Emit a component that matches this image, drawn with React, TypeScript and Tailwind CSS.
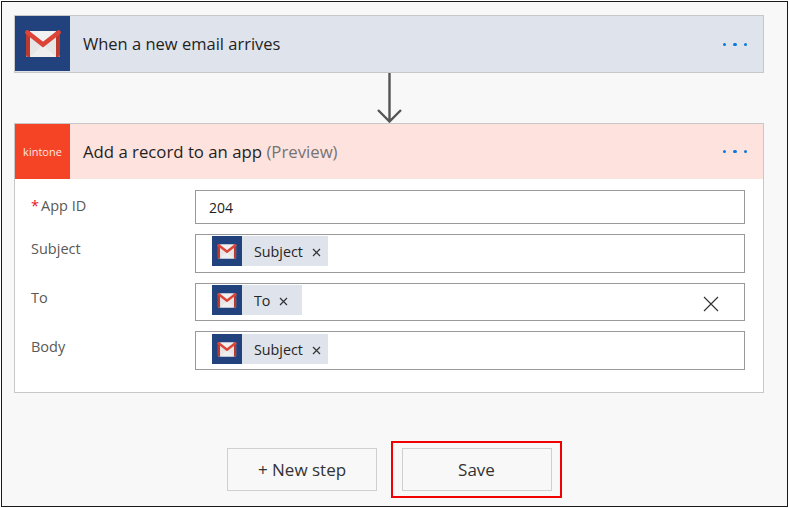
const Gmail = ({ w, h }: { w: number; h: number }) => (
  <svg width={w} height={h} viewBox="0 0 36 28" aria-hidden="true">
    <rect x="1" y="1" width="34" height="26" rx="1.5" fill="#e6e6e6" />
    <path d="M5 1 H31 L18 12 Z" fill="#f1f1f1" />
    <path d="M5 27 L18 15 L31 27 Z" fill="#efefef" />
    <path d="M5 3 V27 H3 Q1 27 1 25 V3 Q1 1 3 1 H5 Z M31 3 V27 H33 Q35 27 35 25 V3 Q35 1 33 1 H31 Z" fill="#bb3a30" />
    <path d="M2.5 2.5 L18 14.5 L33.5 2.5" fill="none" stroke="#dc4437" strokeWidth="4.6" strokeLinecap="round" />
  </svg>
);

const Token = ({ label, width }: { label: string; width: string }) => (
  <div className={`flex h-[30px] items-center bg-[#dfe3ec] ${width}`}>
    <div className="flex h-[30px] w-[30px] shrink-0 items-center justify-center bg-[#21427d]">
      <Gmail w={20} h={15} />
    </div>
    <span className="ml-3 pt-[2px] text-[14.3px] leading-none text-[#252525]">{label}</span>
    <svg className="ml-[9px] mt-[3px]" width="9" height="9" viewBox="0 0 9 9" aria-hidden="true">
      <path d="M1 1 L8 8 M8 1 L1 8" stroke="#333" strokeWidth="1.2" />
    </svg>
  </div>
);

const Row = ({ label, required, pt, tokenPt, h, mb, children }: { label: string; required?: boolean; pt: string; tokenPt: string; h: string; mb: string; children: React.ReactNode }) => (
  <div className={`flex ${mb}`}>
    <div className={`w-[180px] shrink-0 pl-4 text-[14.5px] leading-5 text-[#595959] ${pt}`}>
      {required && <span className="mr-[2px] text-[#e81123]">*</span>}
      {label}
    </div>
    <div className={`relative flex w-[550px] items-start border border-[#999] bg-white pl-4 ${tokenPt} ${h}`}>
      {children}
    </div>
  </div>
);

const Dots = ({ offset }: { offset: string }) => (
  <div className={`flex gap-[7px] pr-[16px] ${offset}`}>
    <span className="h-[3.5px] w-[3.5px] rounded-full bg-[#0a78e0]" />
    <span className="h-[3.5px] w-[3.5px] rounded-full bg-[#0a78e0]" />
    <span className="h-[3.5px] w-[3.5px] rounded-full bg-[#0a78e0]" />
  </div>
);

export default function App() {
  return (
    <div className="h-[508px] w-[789px] bg-white pl-px pt-px font-['Open_Sans',sans-serif]">
      <div className="flex h-[506px] w-[787px] flex-col border border-[#1a1a1a] bg-[#f8f8f8] pl-3 pt-[13px]">
        <div className="flex h-[58px] w-[750px] items-center border border-[#c8c8c8] bg-[#dfe3ec]">
          <div className="flex h-[55px] w-[55px] shrink-0 items-center justify-center self-start bg-[#21427d]">
            <Gmail w={36} h={28} />
          </div>
          <div className="ml-[13px] mt-px flex-1 text-[16.5px] text-[#1f1f1f]">When a new email arrives</div>
          <Dots offset="mt-px" />
        </div>

        <div className="flex h-[50px] w-[750px] justify-center">
          <svg width="28" height="50" viewBox="0 0 28 50" aria-hidden="true">
            <path d="M14.5 0 V48.5 M3 37 L14.5 48.5 L26 37" fill="none" stroke="#555" strokeWidth="2.4" />
          </svg>
        </div>

        <div className="h-[270px] w-[750px] border border-[#c8c8c8] bg-white">
          <div className="flex h-[55px] items-center bg-[#fde2de]">
            <div className="flex h-[55px] w-[55px] shrink-0 items-center justify-center bg-[#f44325]">
              <span className="text-[11px] leading-none text-[#fde6e0]">kintone</span>
            </div>
            <div className="ml-[13px] mt-px flex-1 text-[16.75px] text-[#1f1f1f]">
              Add a record to an app <span className="text-[#747474]">(Preview)</span>
            </div>
            <Dots offset="" />
          </div>
          <div className="pt-[11px]">
            <Row label="App ID" required pt="pt-[6px]" tokenPt="pt-px" h="h-[34px]" mb="mb-[10px]">
              <span className="-ml-[3px] pt-[6px] text-[14px] leading-5 text-[#222]">204</span>
            </Row>
            <Row label="Subject" pt="pt-[5px]" tokenPt="pt-px" h="h-[39px]" mb="mb-[10px]">
              <Token label="Subject" width="w-[116px]" />
            </Row>
            <Row label="To" pt="pt-[5px]" tokenPt="pt-px" h="h-[38px]" mb="mb-[10px]">
              <Token label="To" width="w-[90px]" />
              <svg className="absolute right-[25px] top-[12px]" width="16" height="16" viewBox="0 0 16 16" aria-hidden="true">
                <path d="M1 1 L15 15 M15 1 L1 15" stroke="#333" strokeWidth="1.2" />
              </svg>
            </Row>
            <Row label="Body" pt="pt-[6px]" tokenPt="pt-[2px]" h="h-[39px]" mb="mb-0">
              <Token label="Subject" width="w-[116px]" />
            </Row>
          </div>
        </div>

        <div className="mt-[48px] flex w-[750px] items-center">
          <button className="ml-[213px] h-[43px] w-[150px] border border-[#cfcfcf] text-[17px] text-[#333]">+ New step</button>
          <div className="ml-[14px] flex h-[57px] w-[171px] items-center justify-center border-2 border-[#f00000]">
            <button className="h-[43px] w-[150px] border border-[#cfcfcf] text-[17px] text-[#333]">Save</button>
          </div>
        </div>
      </div>
    </div>
  );
}
